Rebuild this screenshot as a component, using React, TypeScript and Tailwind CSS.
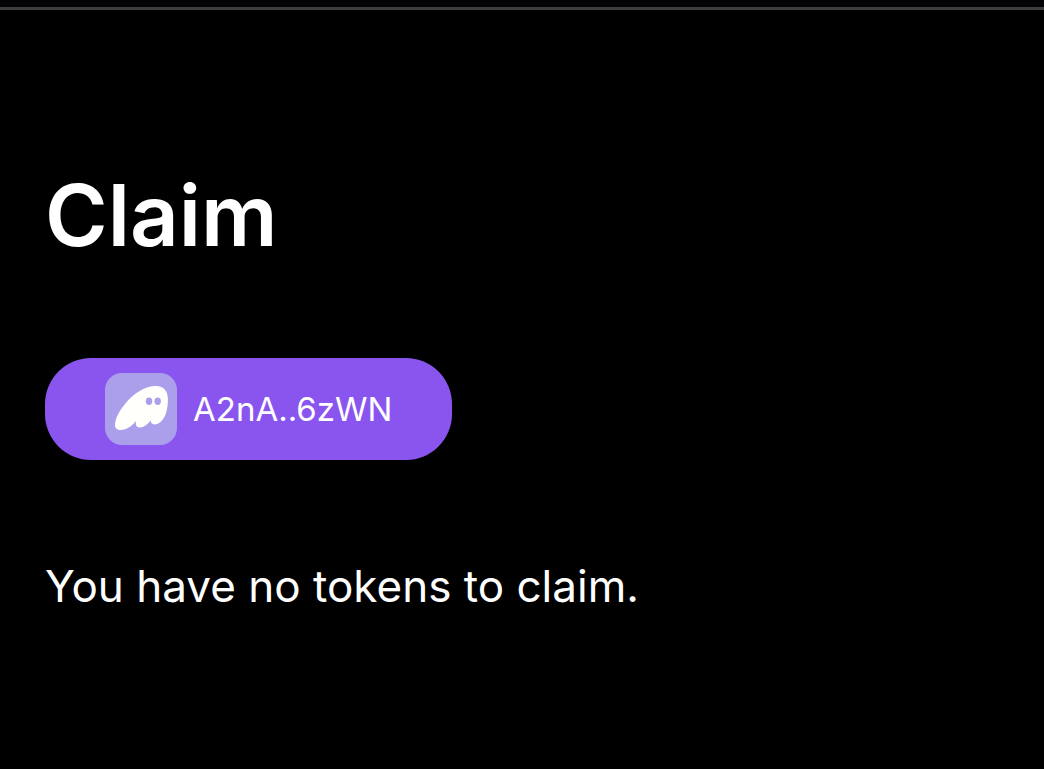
const wallet = {
  address: "A2nA..6zWN",
  message: "You have no tokens to claim.",
};

function GhostIcon() {
  return (
    <svg viewBox="0 0 72 72" className="size-18 shrink-0" aria-hidden="true">
      <rect width="72" height="72" rx="17" fill="#ab9fec" />
      <path
        d="M10 52C10 46 14 38 20 31C29 20 40 13 51 13C58.500 13 62.900 18 62.900 26C62.900 34 61.500 41 58.500 45.500C56 49.500 52.500 51.500 49.500 51.400C47 51.300 45.600 49.800 45.800 47.200C42.500 51.800 38.500 54.400 34.800 54.400C31.200 54.400 30 51.500 31.300 47.500C27.500 53 21 57 15.800 57C12 57 10 55.500 10 52Z"
        fill="#fffffb"
      />
      <ellipse cx="44" cy="28.300" rx="3.200" ry="3.700" fill="#ab9fec" />
      <ellipse cx="52.700" cy="28.300" rx="3.200" ry="3.700" fill="#ab9fec" />
    </svg>
  );
}

export default function App() {
  return (
    <div className="min-h-screen bg-black font-['Inter',sans-serif] text-white">
      <header className="h-[10px] border-b-3 border-[#3e3e3e] bg-[#040408]" />
      <main className="flex flex-col items-start px-[45px] pt-[158px] pb-12">
        <h1 className="text-[85px] leading-[96px] font-semibold">Claim</h1>
        <button
          type="button"
          className="mt-[94px] flex h-[102px] items-center gap-4 rounded-[46px] bg-[#8a55ef] px-[60px] text-[33px] leading-[48px]"
        >
          <GhostIcon />
          <span>{wallet.address}</span>
        </button>
        <p className="mt-24 text-[44px] leading-[60px]">{wallet.message}</p>
      </main>
    </div>
  );
}
